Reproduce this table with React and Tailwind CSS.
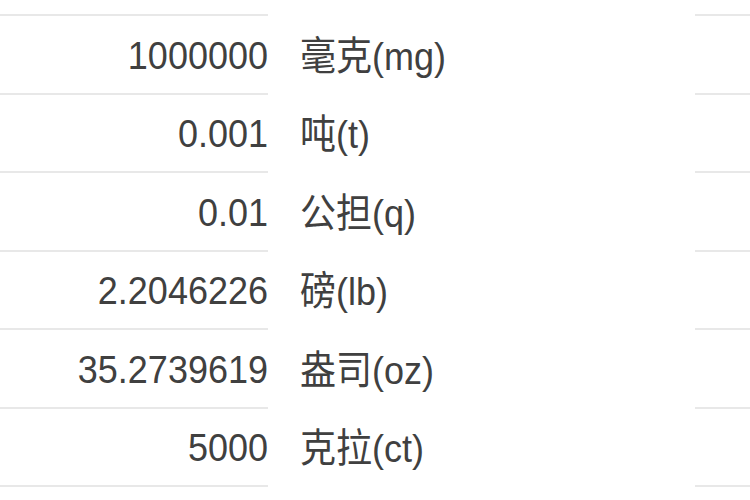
import React from "react";

const rows = [
  { value: "1000000", unit: "毫克(mg)" },
  { value: "0.001", unit: "吨(t)" },
  { value: "0.01", unit: "公担(q)" },
  { value: "2.2046226", unit: "磅(lb)" },
  { value: "35.2739619", unit: "盎司(oz)" },
  { value: "5000", unit: "克拉(ct)" },
];

const App = () => {
  return (
    <div
      className="w-[750px] h-[500px] overflow-hidden bg-white text-[#404040]"
      style={{ fontFamily: '"Liberation Sans", "Noto Sans CJK SC", sans-serif' }}
    >
      {/* partial row at the top */}
      <div className="grid grid-cols-[268px_1fr_55px] h-[16px]">
        <div className="border-b-2 border-[#e8e8e8]" />
        <div />
        <div className="border-b-2 border-[#e8e8e8]" />
      </div>

      {rows.map((r) => (
        <div
          key={r.value}
          className="grid grid-cols-[268px_1fr_55px] h-[78.5px]"
        >
          <div className="flex items-center justify-end border-b-2 border-[#e8e8e8] text-[36px] leading-none pt-[3px]">
            <span className="scale-y-110">{r.value}</span>
          </div>
          <div className="flex items-center pl-[32px] text-[36px] leading-none pt-[3px]">
            <span className="scale-y-110">{r.unit}</span>
          </div>
          <div className="border-b-2 border-[#e8e8e8]" />
        </div>
      ))}
    </div>
  );
};

export default App;
